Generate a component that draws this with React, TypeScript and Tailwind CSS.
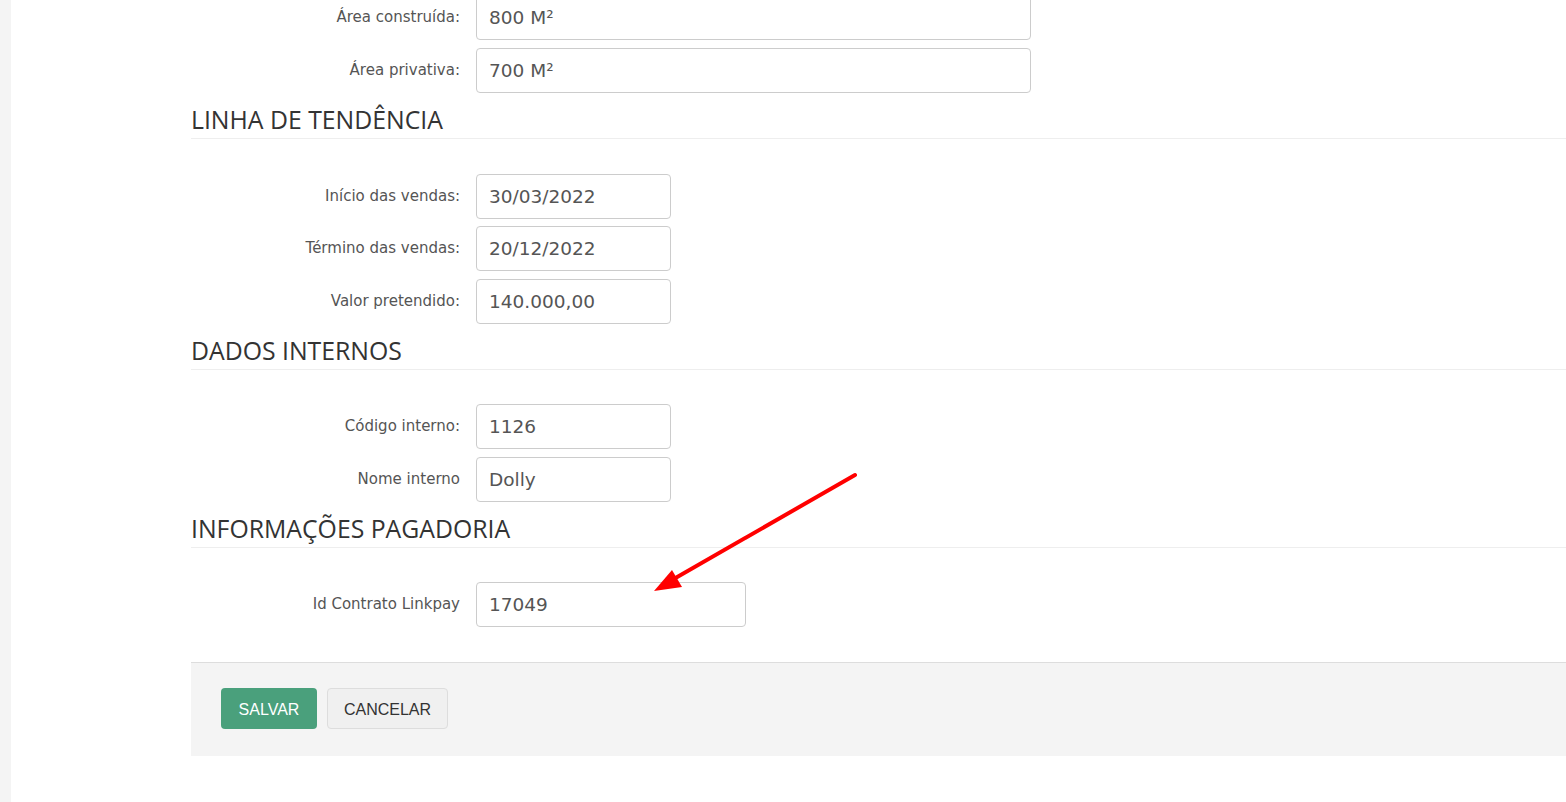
import React from "react";

type Field = { label: string; value: string; width: string };

const areaFields: Field[] = [
  { label: "Área construída:", value: "800 M²", width: "w-[555px]" },
  { label: "Área privativa:", value: "700 M²", width: "w-[555px]" },
];

const tendenciaFields: Field[] = [
  { label: "Início das vendas:", value: "30/03/2022", width: "w-[195px]" },
  { label: "Término das vendas:", value: "20/12/2022", width: "w-[195px]" },
  { label: "Valor pretendido:", value: "140.000,00", width: "w-[195px]" },
];

const internosFields: Field[] = [
  { label: "Código interno:", value: "1126", width: "w-[195px]" },
  { label: "Nome interno", value: "Dolly", width: "w-[195px]" },
];

const pagadoriaFields: Field[] = [
  { label: "Id Contrato Linkpay", value: "17049", width: "w-[270px]" },
];

function FieldRow({ field }: { field: Field }) {
  return (
    <div className="flex items-center">
      <label className="w-[269px] text-right text-[15px] text-[#555] font-['DejaVu_Sans',Verdana,sans-serif]">
        {field.label}
      </label>
      <input
        type="text"
        defaultValue={field.value}
        className={`${field.width} ml-[16px] h-[45px] rounded-[4px] border border-[#ccc] bg-white px-[12px] text-[18.5px] text-[#555] font-['DejaVu_Sans',Verdana,sans-serif] outline-none`}
      />
    </div>
  );
}

function FieldGroup({ fields, className = "" }: { fields: Field[]; className?: string }) {
  return (
    <div className={`flex flex-col ${className}`}>
      {fields.map((f) => (
        <FieldRow key={f.label} field={f} />
      ))}
    </div>
  );
}

function SectionTitle({ children }: { children: React.ReactNode }) {
  return (
    <h3 className="mt-[13px] border-b border-[#eee] pb-[6px] text-[24.8px] leading-[26px] text-[#333] font-['Open_Sans',sans-serif]">
      {children}
    </h3>
  );
}

export default function App() {
  return (
    <div className="relative flex h-[802px] overflow-hidden bg-white">
      <div className="w-[11px] shrink-0 bg-[#f4f4f4]" />
      <main className="flex-1 pl-[180px]">
        <FieldGroup fields={areaFields} className="-mt-[5px] gap-[7.5px]" />

        <SectionTitle>LINHA DE TENDÊNCIA</SectionTitle>
        <FieldGroup fields={tendenciaFields} className="mt-[35px] gap-[7.5px]" />

        <SectionTitle>DADOS INTERNOS</SectionTitle>
        <FieldGroup fields={internosFields} className="mt-[34px] gap-[8px]" />

        <SectionTitle>INFORMAÇÕES PAGADORIA</SectionTitle>
        <FieldGroup fields={pagadoriaFields} className="mt-[34px]" />

        <div className="mt-[35px] flex gap-[10px] border-t border-[#ddd] bg-[#f4f4f4] pl-[30px] pt-[25px] pb-[27px] font-['Liberation_Sans',Arial,sans-serif]">
          <button className="h-[41px] w-[96px] rounded-[4px] bg-[#4aa07c] pt-[3px] text-[16px] text-white">
            SALVAR
          </button>
          <button className="h-[41px] w-[121px] rounded-[4px] border border-[#ddd] bg-[#f0f0f0] pt-[3px] text-[16px] text-[#333]">
            CANCELAR
          </button>
        </div>
      </main>

      {/* annotation arrow */}
      <svg className="pointer-events-none absolute left-0 top-0" width="1566" height="802">
        <line x1="855" y1="475" x2="672" y2="580" stroke="#ff0000" strokeWidth="4" strokeLinecap="round" />
        <polygon points="654,591 672,570 682,587" fill="#ff0000" />
      </svg>
    </div>
  );
}
